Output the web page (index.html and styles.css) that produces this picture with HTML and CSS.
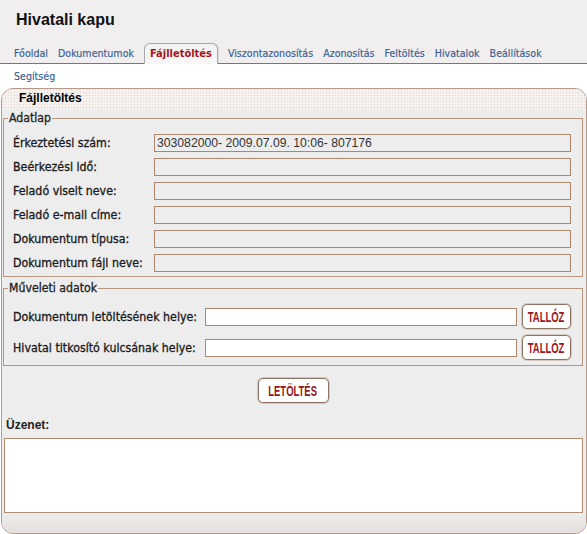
FILE: index.html
```html
<!DOCTYPE html>
<html lang="hu">
<head>
<meta charset="utf-8">
<title>Hivatali kapu</title>
<link rel="stylesheet" href="styles.css">
</head>
<body>
<div class="header">
  <h1 class="title">Hivatali kapu</h1>
  <nav class="tabs">
    <a class="tab">Főoldal</a>
    <a class="tab">Dokumentumok</a>
    <a class="tab tab-active">Fájlletöltés</a>
    <a class="tab">Viszontazonosítás</a>
    <a class="tab">Azonosítás</a>
    <a class="tab">Feltöltés</a>
    <a class="tab">Hivatalok</a>
    <a class="tab">Beállítások</a>
  </nav>
</div>
<div class="subnav"><a class="tab">Segítség</a></div>
<div class="panel">
  <div class="panel-head">Fájlletöltés</div>
  <div class="panel-body">
    <fieldset class="group group-data">
      <legend class="legend">Adatlap</legend>
      <div class="data-grid">
        <span class="label">Érkeztetési szám:</span><div class="field">303082000- 2009.07.09. 10:06- 807176</div>
        <span class="label">Beérkezési idő:</span><div class="field"></div>
        <span class="label">Feladó viselt neve:</span><div class="field"></div>
        <span class="label">Feladó e-mail címe:</span><div class="field"></div>
        <span class="label">Dokumentum típusa:</span><div class="field"></div>
        <span class="label">Dokumentum fájl neve:</span><div class="field"></div>
      </div>
    </fieldset>
    <fieldset class="group group-ops">
      <legend class="legend">Műveleti adatok</legend>
      <div class="ops-grid">
        <span class="label">Dokumentum letöltésének helye:</span><div class="field field-white"></div><button class="btn btn-small"><span class="btn-text">TALLÓZ</span></button>
        <span class="label">Hivatal titkosító kulcsának helye:</span><div class="field field-white"></div><button class="btn btn-small"><span class="btn-text">TALLÓZ</span></button>
      </div>
    </fieldset>
    <div class="actions"><button class="btn btn-wide"><span class="btn-text">LETÖLTÉS</span></button></div>
    <div class="msg-label">Üzenet:</div>
    <div class="msg-box"></div>
  </div>
  <div class="panel-foot"></div>
</div>
</body>
</html>
```
FILE: styles.css
```css
html, body {
  margin: 0;
  padding: 0;
  background: #ffffff;
}
body {
  font-family: "DejaVu Sans Condensed", "DejaVu Sans", sans-serif;
  font-stretch: condensed;
  color: #222;
  overflow: hidden;
}
.header {
  background: #f0eeee;
  padding-top: 10px;
}
.title {
  margin: 0 0 13px 16px;
  font-family: "Liberation Sans", Arial, sans-serif;
  font-stretch: normal;
  font-size: 16px;
  line-height: 20px;
  font-weight: bold;
  color: #111;
}
.tabs {
  display: flex;
  align-items: flex-end;
  height: 20px;
  padding-left: 9px;
  border-bottom: 1px solid #777;
}
.tab {
  display: block;
  padding: 0 5px;
  font-size: 10.6px;
  line-height: 20px;
  color: #3a5d92;
  white-space: nowrap;
  -webkit-text-stroke: 0.15px #3a5d92;
}
.tab-active {
  height: 21px;
  box-sizing: border-box;
  margin: 0 5px -1px 5px;
  border: 1px solid #a8a8a8;
  border-bottom: none;
  border-radius: 6px 6px 0 0;
  background: linear-gradient(#f3f2f2, #f8f7f7);
  color: #a3151d;
  font-weight: bold;
  font-size: 11px;
  line-height: 20px;
  -webkit-text-stroke: 0;
  box-shadow: 1px 0 1px rgba(0,0,0,0.08);
}
.subnav {
  height: 24px;
  padding-left: 9px;
  display: flex;
}
.subnav .tab {
  line-height: 24px;
}
.panel {
  margin-left: 1px;
  border: 1px solid #b7998a;
  border-radius: 12px;
  background: #ededed;
  overflow: hidden;
}
.panel-head {
  height: 20px;
  box-sizing: border-box;
  padding-left: 17px;
  font-family: "Liberation Sans", Arial, sans-serif;
  font-stretch: normal;
  font-weight: bold;
  font-size: 12px;
  line-height: 18px;
  color: #000;
  background-color: #f4f1ef;
  background-image: conic-gradient(from 270deg at 1px 1px, #e3d5cd 90deg, transparent 0);
  background-size: 3px 3px;
}
.panel-body {
  padding: 2px 3px 0 1px;
}
.group {
  margin: 0;
  border: 1px solid #b8957f;
  min-width: 0;
}
.group-data {
  padding: 9px 11px 4px 9px;
}
.group-ops {
  margin-top: 4px;
  padding: 9px 11px 5px 9px;
}
.legend {
  margin-left: -5px;
  padding: 0 1px;
  font-size: 12.2px;
  line-height: 14px;
  color: #222;
  -webkit-text-stroke: 0.3px #222;
}
.data-grid {
  display: grid;
  grid-template-columns: 141px 1fr;
  row-gap: 6px;
  align-items: center;
}
.ops-grid {
  display: grid;
  grid-template-columns: 187px 1fr 49px;
  column-gap: 5px;
  row-gap: 6px;
  align-items: center;
}
.label {
  font-size: 12.3px;
  color: #1a1a1a;
  white-space: nowrap;
  -webkit-text-stroke: 0.3px #1a1a1a;
}
.field {
  height: 18px;
  box-sizing: border-box;
  border: 1px solid #ad866e;
  padding: 0 2px;
  font-family: "Liberation Sans", Arial, sans-serif;
  font-stretch: normal;
  font-size: 12.2px;
  line-height: 16px;
  color: #333;
  white-space: nowrap;
  overflow: hidden;
}
.field-white {
  background: #fff;
}
.btn {
  display: flex;
  align-items: center;
  justify-content: center;
  height: 25px;
  box-sizing: border-box;
  padding: 0;
  margin: 0;
  background: #fff;
  border: 1px solid #8e7363;
  border-radius: 5px;
  box-shadow: 0 0 0 1px #d6c8bf;
  overflow: hidden;
}
.btn-small {
  width: 49px;
}
.btn-wide {
  width: 71px;
}
.btn-text {
  display: inline-block;
  font-family: "Liberation Sans", Arial, sans-serif;
  font-stretch: normal;
  font-weight: bold;
  font-size: 15px;
  line-height: 16px;
  color: #98161e;
  transform: scaleX(0.63);
  white-space: nowrap;
}
.actions {
  display: flex;
  justify-content: center;
  margin-top: 12px;
}
.msg-label {
  margin: 15px 0 0 3px;
  font-family: "Liberation Sans", Arial, sans-serif;
  font-stretch: normal;
  font-weight: bold;
  font-size: 12px;
  line-height: 14px;
  color: #222;
}
.msg-box {
  margin: 6px 0 0 1px;
  height: 75px;
  box-sizing: border-box;
  border: 1px solid #b08a73;
  background: #fff;
}
.panel-foot {
  height: 20px;
  background: linear-gradient(#ededed, #e4dfdc);
}
```
